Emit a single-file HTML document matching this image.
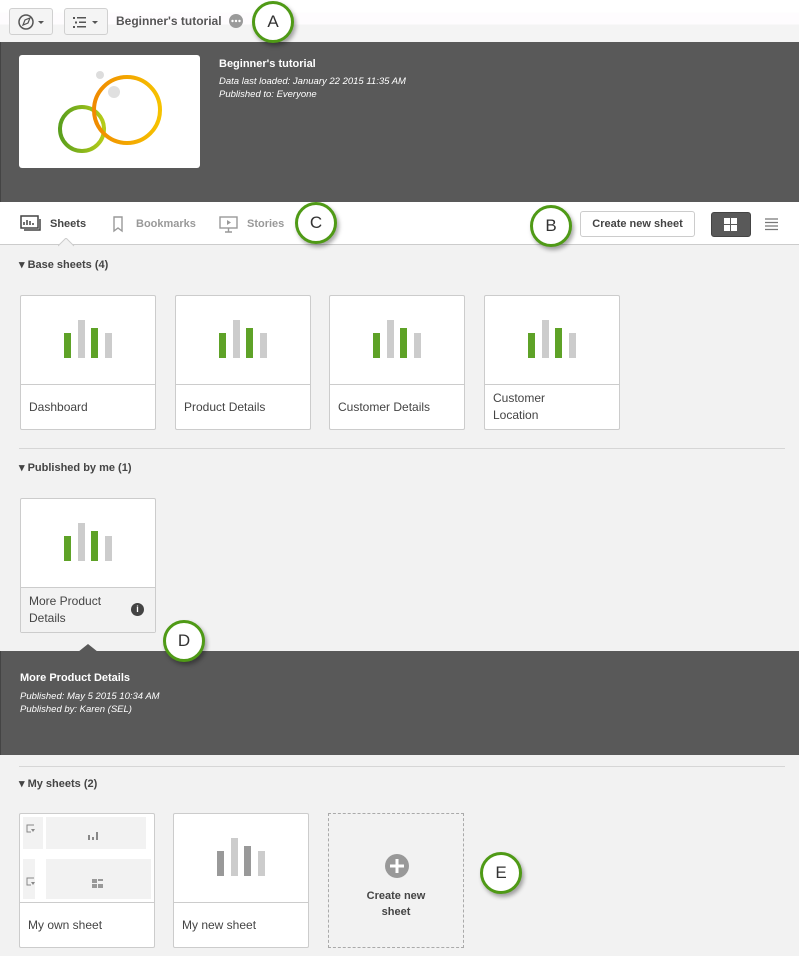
<!DOCTYPE html>
<html><head><style>
*{box-sizing:border-box;margin:0;padding:0}
body{width:799px;height:956px;background:#f2f2f2;font-family:"Liberation Sans",sans-serif;position:relative;overflow:hidden;color:#404040}
.abs{position:absolute}
.top{left:0;top:0;width:799px;height:42px;background:linear-gradient(#fff 0,#fff 12px,#fefcfe 13px,#fefcfe 24px,#f4f4f4 25px)}
.btn{border:1px solid #d0d0d0;border-radius:3px;background:#f4f4f4}
.dark{background:#595959;color:#fff}
.callout{width:42px;height:42px;border-radius:50%;border:3px solid #4f9a16;background:#fff;box-shadow:2px 3px 4px rgba(0,0,0,.35);font-size:17px;text-align:center;line-height:36px;color:#333}
.card{width:136px;height:135px;background:#fff;border:1px solid #ccc;border-radius:2px}
.card .lbl{position:absolute;left:0;right:0;top:88px;bottom:0;border-top:1px solid #ccc;font-size:12px;padding:14px 0 0 8px;color:#444;line-height:17px}
.bars{position:absolute;left:43px;top:24px}
.hdr{font-size:11px;font-weight:bold;color:#444}
.sep{height:1px;background:#d6d6d6}
</style></head><body>
<div class="abs top"></div>
<div class="abs btn" style="left:9px;top:8px;width:44px;height:27px">
<svg width="44" height="27" class="abs" style="left:0;top:0"><circle cx="16" cy="13" r="7" fill="none" stroke="#555" stroke-width="1.5"/><path d="M13 16l2-5 5-2-2 5z" fill="none" stroke="#555" stroke-width="1.2"/><path d="M28 12h6l-3 3z" fill="#555"/></svg></div>
<div class="abs btn" style="left:64px;top:8px;width:44px;height:27px">
<svg width="44" height="27" class="abs" style="left:0;top:0"><g fill="#555"><rect x="8" y="8" width="2" height="2"/><rect x="12" y="8" width="9" height="1.5"/><rect x="10" y="12.5" width="2" height="2"/><rect x="14" y="12.5" width="7" height="1.5"/><rect x="8" y="17" width="2" height="2"/><rect x="12" y="17" width="9" height="1.5"/><path d="M27 12h6l-3 3z"/></g></svg></div>
<div class="abs" style="left:116px;top:14px;font-size:12px;font-weight:bold;color:#555">Beginner's tutorial</div>
<svg class="abs" style="left:229px;top:14px" width="14" height="14"><circle cx="7" cy="7" r="7" fill="#9a9a9a"/><circle cx="3.5" cy="7" r="1.2" fill="#fff"/><circle cx="7" cy="7" r="1.2" fill="#fff"/><circle cx="10.5" cy="7" r="1.2" fill="#fff"/></svg>

<div class="abs dark" style="left:0;top:42px;width:799px;height:160px;border-left:1px solid #444"></div>
<div class="abs" style="left:19px;top:55px;width:181px;height:113px;background:#fff;border-radius:3px">
<svg width="181" height="113"><circle cx="81" cy="20" r="4" fill="#ddd"/><circle cx="95" cy="37" r="6" fill="#e0e0e0"/><defs><linearGradient id="g" x1="0" x2="1"><stop offset="0" stop-color="#5a9f1d"/><stop offset="1" stop-color="#b5cc19"/></linearGradient><linearGradient id="o" x1="0" x2="1"><stop offset="0" stop-color="#f08a00"/><stop offset="1" stop-color="#f6c200"/></linearGradient></defs><circle cx="63" cy="74" r="22" fill="none" stroke="url(#g)" stroke-width="4"/><circle cx="108" cy="55" r="33" fill="none" stroke="url(#o)" stroke-width="4"/></svg></div>
<div class="abs" style="left:219px;top:58px;color:#fff;font-size:11px;font-weight:bold">Beginner's tutorial</div>
<div class="abs" style="left:219px;top:75px;color:#fff;font-size:9.5px;font-style:italic;line-height:13px">Data last loaded: January 22 2015 11:35 AM<br>Published to: Everyone</div>

<div class="abs" style="left:0;top:202px;width:799px;height:43px;background:#fff;border-bottom:1px solid #ccc"></div>
<svg class="abs" style="left:20px;top:215px" width="22" height="18"><rect x="1" y="1" width="17" height="12" fill="none" stroke="#444" stroke-width="1.5"/><path d="M4 10V7M7 10V5M10 10V6M13 10V8" stroke="#444" stroke-width="1.5"/><path d="M20 4v11H4" fill="none" stroke="#444" stroke-width="1.5"/></svg>
<div class="abs" style="left:50px;top:218px;font-size:11px;font-weight:bold;color:#444">Sheets</div>
<svg class="abs" style="left:112px;top:216px" width="12" height="17"><path d="M2 1h8v14l-4-3-4 3z" fill="none" stroke="#999" stroke-width="1.4"/></svg>
<div class="abs" style="left:136px;top:218px;font-size:11px;font-weight:bold;color:#999">Bookmarks</div>
<svg class="abs" style="left:219px;top:216px" width="20" height="18"><rect x="1" y="1" width="17" height="11" fill="none" stroke="#999" stroke-width="1.4"/><path d="M8 4l4 2.5-4 2.5z" fill="#999"/><path d="M9.5 12v4M6 16h7" stroke="#999" stroke-width="1.4"/></svg>
<div class="abs" style="left:247px;top:218px;font-size:11px;font-weight:bold;color:#999">Stories</div>
<svg class="abs" style="left:58px;top:238px" width="20" height="9"><path d="M0 8L8 0 16 8" fill="#f2f2f2" stroke="#ccc"/></svg>
<div class="abs" style="left:580px;top:211px;width:115px;height:26px;border:1px solid #ccc;border-radius:3px;background:#fff;font-size:11px;font-weight:bold;text-align:center;line-height:24px;color:#444">Create new sheet</div>
<div class="abs" style="left:711px;top:212px;width:40px;height:25px;background:#595959;border-radius:3px;border:1px solid #444">
<svg width="40" height="25" class="abs" style="left:-1px;top:-1px"><g fill="#fff"><rect x="13" y="6" width="6" height="6"/><rect x="20" y="6" width="6" height="6"/><rect x="13" y="13" width="6" height="6"/><rect x="20" y="13" width="6" height="6"/></g></svg></div>
<svg class="abs" style="left:765px;top:218px" width="14" height="14"><path d="M0 1h13M0 4.5h13M0 8h13M0 11.5h13" stroke="#777" stroke-width="1.2"/></svg>

<div class="abs hdr" style="left:19px;top:258px">▾ Base sheets (4)</div>
<div class="abs card" style="left:20px;top:295px"><svg class="bars" width="50" height="40"><rect x="0" y="13" width="7" height="25" fill="#5ea227"/><rect x="14" y="0" width="7" height="38" fill="#ccc"/><rect x="27" y="8" width="7" height="30" fill="#5ea227"/><rect x="41" y="13" width="7" height="25" fill="#ccc"/></svg><div class="lbl">Dashboard</div></div>
<div class="abs card" style="left:175px;top:295px"><svg class="bars" width="50" height="40"><rect x="0" y="13" width="7" height="25" fill="#5ea227"/><rect x="14" y="0" width="7" height="38" fill="#ccc"/><rect x="27" y="8" width="7" height="30" fill="#5ea227"/><rect x="41" y="13" width="7" height="25" fill="#ccc"/></svg><div class="lbl">Product Details</div></div>
<div class="abs card" style="left:329px;top:295px"><svg class="bars" width="50" height="40"><rect x="0" y="13" width="7" height="25" fill="#5ea227"/><rect x="14" y="0" width="7" height="38" fill="#ccc"/><rect x="27" y="8" width="7" height="30" fill="#5ea227"/><rect x="41" y="13" width="7" height="25" fill="#ccc"/></svg><div class="lbl">Customer Details</div></div>
<div class="abs card" style="left:484px;top:295px"><svg class="bars" width="50" height="40"><rect x="0" y="13" width="7" height="25" fill="#5ea227"/><rect x="14" y="0" width="7" height="38" fill="#ccc"/><rect x="27" y="8" width="7" height="30" fill="#5ea227"/><rect x="41" y="13" width="7" height="25" fill="#ccc"/></svg><div class="lbl" style="padding-top:5px">Customer<br>Location</div></div>

<div class="abs sep" style="left:19px;top:448px;width:766px"></div>
<div class="abs hdr" style="left:19px;top:461px">▾ Published by me (1)</div>
<div class="abs card" style="left:20px;top:498px"><svg class="bars" width="50" height="40"><rect x="0" y="13" width="7" height="25" fill="#5ea227"/><rect x="14" y="0" width="7" height="38" fill="#ccc"/><rect x="27" y="8" width="7" height="30" fill="#5ea227"/><rect x="41" y="13" width="7" height="25" fill="#ccc"/></svg><div class="lbl" style="padding-top:5px;background:#f2f2f2">More Product<br>Details</div>
<div class="abs" style="left:110px;top:104px;width:13px;height:13px;border-radius:50%;background:#444;color:#fff;font-size:9px;font-weight:bold;text-align:center;line-height:13px">i</div></div>

<div class="abs dark" style="left:0;top:651px;width:799px;height:104px;border-left:1px solid #444"></div>
<svg class="abs" style="left:78px;top:644px" width="22" height="8"><path d="M0 8L10 0 20 8z" fill="#595959"/></svg>
<div class="abs" style="left:20px;top:672px;color:#fff;font-size:11px;font-weight:bold">More Product Details</div>
<div class="abs" style="left:20px;top:690px;color:#fff;font-size:9.5px;font-style:italic;line-height:13px">Published: May 5 2015 10:34 AM<br>Published by: Karen (SEL)</div>

<div class="abs sep" style="left:19px;top:766px;width:766px"></div>
<div class="abs hdr" style="left:19px;top:777px">▾ My sheets (2)</div>
<div class="abs card" style="left:19px;top:813px">
<div class="abs" style="left:3px;top:3px;width:20px;height:32px;background:#f2f2f2"></div>
<div class="abs" style="left:26px;top:3px;width:100px;height:32px;background:#f2f2f2"></div>
<div class="abs" style="left:3px;top:45px;width:12px;height:40px;background:#f2f2f2"></div>
<div class="abs" style="left:26px;top:45px;width:105px;height:40px;background:#f2f2f2"></div>
<svg class="abs" style="left:6px;top:10px" width="10" height="10"><path d="M8 1H1v7h4" fill="none" stroke="#888"/><path d="M5 5h4l-2 3z" fill="#888"/></svg>
<svg class="abs" style="left:6px;top:63px" width="10" height="10"><path d="M8 1H1v7h4" fill="none" stroke="#888"/><path d="M5 5h4l-2 3z" fill="#888"/></svg>
<svg class="abs" style="left:68px;top:17px" width="12" height="10"><path d="M1 4v5M5 6v3M9 1v8" stroke="#888" stroke-width="2"/></svg>
<svg class="abs" style="left:72px;top:65px" width="12" height="10"><g fill="#999"><rect x="0" y="0" width="5" height="4"/><rect x="6" y="0" width="5" height="2"/><rect x="0" y="5" width="5" height="4"/><rect x="6" y="5" width="5" height="4"/></g></svg>
<div class="lbl">My own sheet</div></div>
<div class="abs card" style="left:173px;top:813px"><svg class="bars" width="50" height="40"><rect x="0" y="13" width="7" height="25" fill="#999"/><rect x="14" y="0" width="7" height="38" fill="#ccc"/><rect x="27" y="8" width="7" height="30" fill="#999"/><rect x="41" y="13" width="7" height="25" fill="#ccc"/></svg><div class="lbl">My new sheet</div></div>
<div class="abs" style="left:328px;top:813px;width:136px;height:135px;border:1px dashed #aaa">
<svg class="abs" style="left:56px;top:40px" width="24" height="24"><circle cx="12" cy="12" r="12" fill="#999"/><path d="M12 5v14M5 12h14" stroke="#fff" stroke-width="3"/></svg>
<div class="abs" style="left:0;right:0;top:74px;text-align:center;font-size:11px;font-weight:bold;color:#444;line-height:16px">Create new<br>sheet</div></div>

<div class="abs callout" style="left:252px;top:1px">A</div>
<div class="abs callout" style="left:295px;top:202px">C</div>
<div class="abs callout" style="left:530px;top:205px">B</div>
<div class="abs callout" style="left:163px;top:620px">D</div>
<div class="abs callout" style="left:480px;top:852px">E</div>
</body></html>
